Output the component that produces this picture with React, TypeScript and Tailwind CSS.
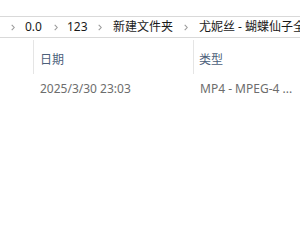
import React from "react";

const Chevron = () => (
  <svg width="4" height="7" viewBox="0 0 4 7" className="shrink-0 block">
    <path d="M0.7 0.8 L3.2 3.5 L0.7 6.2" fill="none" stroke="#9a9a9a" strokeWidth="1.1" />
  </svg>
);

export default function App() {
  const font = { fontFamily: '"Segoe UI", "Noto Sans", "Noto Sans CJK SC", sans-serif' };
  return (
    <div className="w-[300px] h-[248px] bg-white overflow-hidden text-[12px]" style={font}>
      <div className="h-[16px]" />
      <div className="h-[22px] border-y border-[#d9d9d9] flex items-center whitespace-nowrap text-[#1a1a1a] overflow-hidden">
        <div className="w-[11px] shrink-0" />
        <Chevron />
        <span className="ml-[10px] w-[29px] shrink-0">0.0</span>
        <Chevron />
        <span className="ml-[9px] w-[31px] shrink-0">123</span>
        <Chevron />
        <span className="ml-[11px] w-[71px] shrink-0">新建文件夹</span>
        <Chevron />
        <span className="ml-[11px] shrink-0">尤妮丝 - 蝴蝶仙子全集</span>
      </div>
      <div className="h-[2px]" />
      <div className="flex h-[34px] text-[#4c607a]">
        <div className="w-[33px] shrink-0" />
        <div className="w-[160px] shrink-0 h-full border-l border-[#e5e5e5] flex items-center pl-[6px] pt-[6px]">日期</div>
        <div className="flex-1 h-full border-l border-[#e5e5e5] flex items-center pl-[5px] pt-[6px]">类型</div>
      </div>
      <div className="flex h-[22px] items-center text-[#6d6d6d] whitespace-nowrap mt-[4px]">
        <div className="w-[40px] shrink-0" />
        <div className="w-[160px] shrink-0">2025/3/30 23:03</div>
        <div>MP4 - MPEG-4 ...</div>
      </div>
    </div>
  );
}
